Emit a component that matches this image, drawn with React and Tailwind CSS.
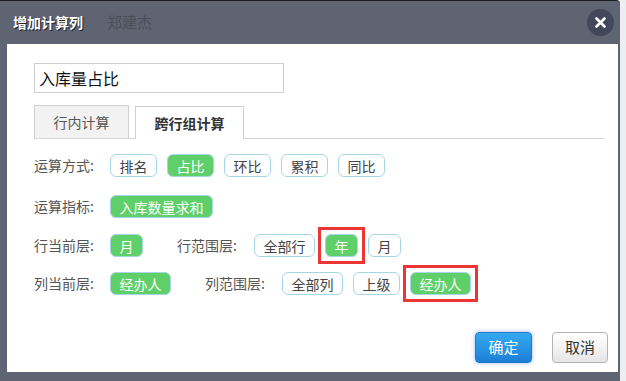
import React from "react";

const font = { fontFamily: '"Noto Sans CJK SC", "Noto Sans", sans-serif' };

const Chip = ({ children, active }) => (
    <span
        className={`inline-flex items-center h-[23px] px-[8.5px] rounded-[6px] border text-[14px] leading-none ${
            active
                ? "bg-[#5fcf69] border-[#a6d6e6] text-white"
                : "bg-white border-[#a6d6e6] text-[#444]"
        }`}
    >
        {children}
    </span>
);

const Marked = ({ children }) => (
    <span className="-m-[7px] p-[4px] border-[3px] border-[#ec3535] inline-flex">
        {children}
    </span>
);

const Label = ({ children, className = "" }) => (
    <span className={`text-[14px] text-[#555] w-[76px] shrink-0 ${className}`}>
        {children}
    </span>
);

const App = () => {
    return (
        <div className="w-[626px] h-[381px] bg-[#eceef1] overflow-hidden" style={font}>
            <div className="w-[620px] h-[381px] bg-[#5f6472] rounded-tr-[4px] border-t border-[#1b1c20] flex flex-col">
                {/* header */}
                <div className="h-[43px] flex items-center pl-[13px] pr-[6px] shrink-0">
                    <span className="text-white font-bold text-[14px] [text-shadow:1px_1px_0_#222]">
                        增加计算列
                    </span>
                    <span className="ml-[24px] text-[15px] text-[#4b4f5a]">郑建杰</span>
                    <button className="ml-auto w-[27px] h-[27px] rounded-full bg-[#43475a] flex items-center justify-center">
                        <svg width="11" height="11" viewBox="0 0 11 11">
                            <path d="M1.5 1.5 L9.5 9.5 M9.5 1.5 L1.5 9.5" stroke="white" strokeWidth="2.6" strokeLinecap="round" />
                        </svg>
                    </button>
                </div>

                {/* body */}
                <div className="ml-[7px] mr-[2px] h-[328px] bg-white flex flex-col pl-[27px] pr-[10px]">
                    <div className="mt-[19px] w-[250px] h-[30px] border border-[#cfcfcf] flex items-center px-[4px] text-[16px] text-[#111]">
                        入库量占比
                    </div>

                    <div className="mt-[12px] flex items-end border-b border-[#d6d6d6] mr-[4px]">
                        <div className="w-[95px] h-[33px] bg-[#f2f2f2] border border-[#d0d0d0] border-b-0 flex items-center justify-center text-[14px] text-[#555]">
                            行内计算
                        </div>
                        <div className="ml-[6px] w-[109px] h-[33px] bg-white border border-[#d0d0d0] border-b-0 -mb-px flex items-center justify-center text-[14px] font-bold text-[#333]">
                            跨行组计算
                        </div>
                    </div>

                    <div className="mt-[15px] flex items-center">
                        <Label>运算方式:</Label>
                        <div className="flex gap-[10px]">
                            <Chip>排名</Chip>
                            <Chip active>占比</Chip>
                            <Chip>环比</Chip>
                            <Chip>累积</Chip>
                            <Chip>同比</Chip>
                        </div>
                    </div>

                    <div className="mt-[18px] flex items-center">
                        <Label>运算指标:</Label>
                        <Chip active>入库数量求和</Chip>
                    </div>

                    <div className="mt-[16px] flex items-center">
                        <Label>行当前层:</Label>
                        <Chip active>月</Chip>
                        <Label className="ml-[34px] w-[77px]">行范围层:</Label>
                        <div className="flex gap-[10px]">
                            <Chip>全部行</Chip>
                            <Marked>
                                <Chip active>年</Chip>
                            </Marked>
                            <Chip>月</Chip>
                        </div>
                    </div>

                    <div className="mt-[15px] flex items-center">
                        <Label>列当前层:</Label>
                        <Chip active>经办人</Chip>
                        <Label className="ml-[34px] w-[77px]">列范围层:</Label>
                        <div className="flex gap-[10px]">
                            <Chip>全部列</Chip>
                            <Chip>上级</Chip>
                            <Marked>
                                <Chip active>经办人</Chip>
                            </Marked>
                        </div>
                    </div>

                    <div className="mt-auto mb-[9px] flex justify-end gap-[20px]">
                        <button className="w-[57px] h-[31px] rounded-[4px] border border-[#1f78c8] bg-gradient-to-b from-[#36aaf0] to-[#1c7fd6] text-white text-[15px] shadow-[0_0_4px_#9fb6ff]">
                            确定
                        </button>
                        <button className="w-[56px] h-[31px] rounded-[4px] border border-[#b3b3b3] bg-gradient-to-b from-white to-[#e6e6e6] text-[#333] text-[15px]">
                            取消
                        </button>
                    </div>
                </div>
            </div>
        </div>
    );
};

export default App;
